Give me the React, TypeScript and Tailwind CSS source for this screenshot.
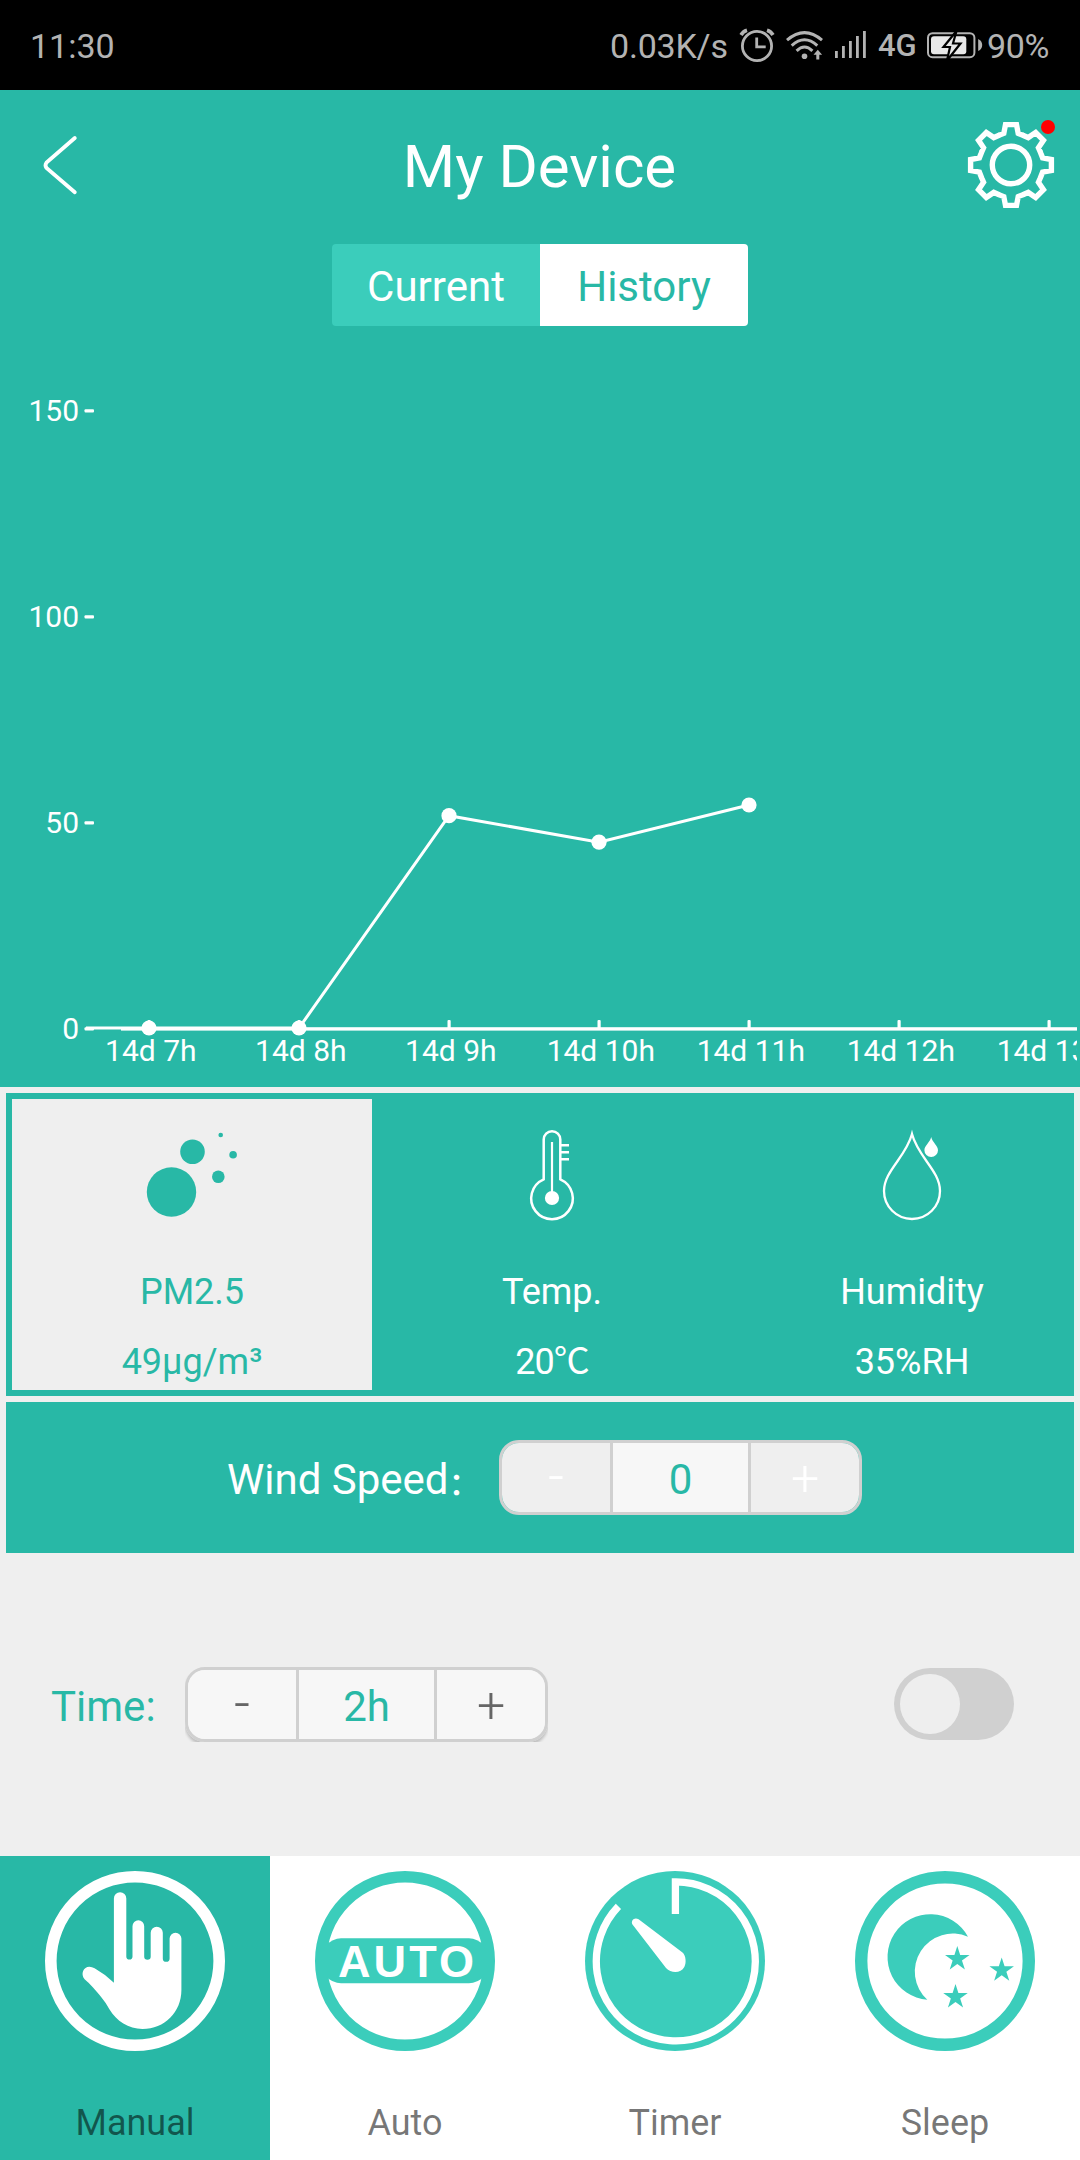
import type { ReactNode } from "react";

const TEAL = "#28b8a6";
const MINT = "#3bcdbb";

function StatusBar() {
  return (
    <div className="flex h-[90px] items-center bg-black pl-[30px] text-[34px] leading-[40px] text-[#b3b3b3]">
      <span className="mt-px">11:30</span>
      <span className="mt-px ml-auto w-[119px] whitespace-nowrap tracking-[-0.2px]">0.03K/s</span>
      <svg className="ml-[10px] shrink-0" width="36" height="36" viewBox="739 27 36 36" fill="none" stroke="#b3b3b3">
        <circle cx="757" cy="46" r="14.6" strokeWidth="2.8" />
        <path d="M756.7 37.5V46.8H765.7" strokeWidth="2.8" />
        <path d="M741 35Q743 31.5 747 30.3M767 30.3Q771 31.5 773 35" strokeWidth="3.6" />
      </svg>
      <svg className="ml-[9px] shrink-0" width="40" height="36" viewBox="784 27 40 36" fill="none" stroke="#b3b3b3">
        <path d="M787 40.2Q804.5 25 822 40.2M791.7 45.6Q804.5 34 817.3 45.6M796.6 50.8Q804.5 43.2 812.4 50.8" strokeWidth="3" />
        <circle cx="804.5" cy="56.2" r="2.8" fill="#b3b3b3" stroke="none" />
        <path d="M813.5 54.8L817.8 49.8L822.1 54.8H819.3V59.6H816.3V54.8Z" fill="#b3b3b3" stroke="none" />
      </svg>
      <svg className="ml-[11px] shrink-0" width="32" height="36" viewBox="835 27 32 36" fill="#b3b3b3">
        <rect x="835" y="51" width="2.8" height="7" />
        <rect x="842" y="46" width="2.8" height="12" />
        <rect x="849" y="41" width="2.8" height="17" />
        <rect x="856" y="36" width="2.8" height="22" />
        <rect x="863" y="31" width="2.8" height="27" />
      </svg>
      <span className="mt-[2px] ml-[11px] w-[40px] text-[31px] font-medium">4G</span>
      <svg className="ml-[7px] shrink-0" width="59" height="36" viewBox="925 27 59 36">
        <rect x="928" y="33.2" width="46.4" height="24" rx="4.5" fill="none" stroke="#b3b3b3" strokeWidth="2" />
        <rect x="931" y="36.3" width="35.3" height="18" rx="3" fill="#e8e8e8" />
        <path d="M978.2 39Q982.2 41 982.2 45T978.2 51Z" fill="#b3b3b3" />
        <path d="M956.5 31L943.5 47H950L947 60.5L960.5 43.5H953Z" fill="#e8e8e8" stroke="#000" strokeWidth="2.2" />
      </svg>
      <span className="mt-px ml-[3px] w-[93px] tracking-[-0.3px]">90%</span>
    </div>
  );
}

function Gear() {
  const steps = [0, 45, 90, 135, 180, 225, 270, 315];
  const points = steps
    .flatMap((deg) =>
      [
        [-13.3, -29.2],
        [-7.2, -31.6],
        [-5.5, -40.4],
        [5.5, -40.4],
        [7.2, -31.6],
        [13.3, -29.2],
      ].map(([x, y]) => {
        const a = (deg * Math.PI) / 180;
        return `${(x * Math.cos(a) - y * Math.sin(a)).toFixed(2)},${(x * Math.sin(a) + y * Math.cos(a)).toFixed(2)}`;
      }),
    )
    .join(" ");
  return (
    <svg width="88" height="88" viewBox="-44 -44 88 88" fill="none" stroke="#fff" strokeWidth="5.4">
      <polygon points={points} />
      <circle r="18.7" />
    </svg>
  );
}

const hours = ["14d 7h", "14d 8h", "14d 9h", "14d 10h", "14d 11h", "14d 12h", "14d 13h"];
const series: [number, number][] = [
  [149, 1028],
  [299, 1028],
  [449, 815.7],
  [599, 842.2],
  [749, 805],
];

function Chart() {
  return (
    <svg className="block" width="1077" height="761" viewBox="0 326 1077 761" fill="#fff" stroke="none">
      {[150, 100, 50, 0].map((v, i) => (
        <g key={v}>
          <text x="79" y={421 + i * 206} fontSize="30" textAnchor="end">
            {v}
          </text>
          <rect x="84.5" y={409.3 + i * 206} width="9.5" height="3.2" rx="1" />
        </g>
      ))}
      <rect x="121" y="1027.2" width="960" height="3.4" />
      {hours.map((h, i) => (
        <g key={h}>
          <rect x={147.5 + i * 150} y="1020" width="3.2" height="9" rx="1" />
          <text x={150.8 + i * 150} y="1061" fontSize="30" textAnchor="middle">
            {h}
          </text>
        </g>
      ))}
      <polyline points={"86,1028 " + series.map((p) => p.join(",")).join(" ")} fill="none" stroke="#fff" strokeWidth="3" />
      {series.map(([x, y]) => (
        <circle key={x} cx={x} cy={y} r="7.6" />
      ))}
    </svg>
  );
}

function Metric({ icon, name, value, active }: { icon: ReactNode; name: string; value: ReactNode; active?: boolean }) {
  return (
    <div
      className={
        "flex h-[291px] w-[360px] shrink-0 flex-col items-center text-[36px] leading-[56px] " +
        (active ? "bg-[#efefef] text-[#28b8a6]" : "text-white")
      }
    >
      <div className="mt-[26px] h-[139px]">{icon}</div>
      <div>{name}</div>
      <div className="mt-[14px]">{value}</div>
    </div>
  );
}

const bubbles = (
  <svg width="100" height="100" viewBox="142 1125 100 100" fill={TEAL}>
    <circle cx="171.5" cy="1192" r="24.7" />
    <circle cx="192.5" cy="1151.7" r="12.3" />
    <circle cx="218.3" cy="1176.7" r="6.3" />
    <circle cx="233.1" cy="1154.7" r="3.8" />
    <circle cx="220.7" cy="1135" r="2.3" />
  </svg>
);

const thermometer = (
  <svg width="100" height="100" viewBox="502 1125 100 100" fill="none" stroke="#fff" strokeWidth="2.5">
    <path d="M543.7 1179.3V1139.5A8.3 8.3 0 0 1 560.3 1139.5V1179.3A20.8 20.8 0 1 1 543.7 1179.3Z" />
    <path d="M552 1142V1198" strokeWidth="2.2" />
    <circle cx="552" cy="1198" r="7.1" fill="#fff" stroke="none" />
    <path d="M561 1145.2H569M561 1152.2H569M561 1159.2H569" />
  </svg>
);

const droplets = (
  <svg width="100" height="100" viewBox="862 1125 100 100" fill="none" stroke="#fff" strokeWidth="2.3">
    <path d="M912 1134C906 1157 884 1171 884 1191A28 28 0 0 0 940 1191C940 1171 918 1157 912 1134Z" />
    <path d="M931.2 1137C930 1142.5 924.4 1145.5 924.4 1150.3A6.8 6.8 0 0 0 938 1150.3C938 1145.5 932.4 1142.5 931.2 1137Z" fill="#fff" stroke="none" />
  </svg>
);

function Stepper({ value, disabled }: { value: string; disabled?: boolean }) {
  const side = disabled ? "bg-[#efefef] text-white" : "bg-[#f7f7f7] text-[#666]";
  return (
    <div className="h-[75px] w-[363px] overflow-hidden">
      <div
        className={
          "flex h-full overflow-hidden rounded-[20px] border-3 border-[#d0d0d0] text-center " +
          (disabled ? "" : "shadow-[0_3px_3px_rgba(0,0,0,0.2)]")
        }
      >
        <div className={"w-[108px] text-[56px] leading-[66px] font-light " + side}>-</div>
        <div className="w-[141px] border-x-3 border-[#d0d0d0] bg-[#f7f7f7] text-[42px] leading-[73px] text-[#28b8a6]">{value}</div>
        <div className={"w-[108px] text-[50px] leading-[70px] font-light " + side}>+</div>
      </div>
    </div>
  );
}

const manualIcon = (
  <svg width="180" height="180" viewBox="0 0 180 180" fill="#fff">
    <circle cx="90" cy="90" r="84.2" fill="none" stroke="#fff" strokeWidth="11.6" />
    <path d="M68.9 111.7V27.5A6.2 6.2 0 0 1 81.3 27.5V85.5A3.1 3.1 0 0 0 87.5 85.5V55.2A5.85 5.85 0 0 1 99.2 55.2V85.5A3.2 3.2 0 0 0 105.7 85.5V61.7A6 6 0 0 1 117.8 61.7V87.4A3.4 3.4 0 0 0 124.6 87.4V67.6A5.9 5.9 0 0 1 136.4 67.6V119C136.4 141 119.5 158 97.5 158C83.5 158 71.5 150 64.4 138.3Q61.5 132.5 56.5 126.5C51 119.5 44.5 112.3 39.6 108.3C35.2 102.8 38.5 95.7 44.4 95.7Q47 95.7 49.6 97.3Q60.5 103.5 68.9 111.7Z" />
  </svg>
);

const autoIcon = (
  <svg width="180" height="180" viewBox="0 0 180 180">
    <circle cx="90" cy="90" r="84.2" fill="none" stroke={MINT} strokeWidth="11.6" />
    <path d="M10 75Q18 67.3 26 67.3H154Q162 67.3 170 75V105Q162 112.3 154 112.3H26Q18 112.3 10 105Z" fill={MINT} />
    <text x="23" y="106" fontSize="45" fontWeight="bold" fill="#fff" textLength="136" style={{ fontFamily: '"Liberation Sans", sans-serif' }}>
      AUTO
    </text>
  </svg>
);

const timerIcon = (
  <svg width="180" height="180" viewBox="0 0 180 180">
    <circle cx="90" cy="90" r="90" fill={MINT} />
    <path d="M33.4 35.4A79.5 79.5 0 1 0 90.4 10.9V43" fill="none" stroke="#fff" strokeWidth="7.3" />
    <path d="M53.6 48.3L97.5 81.5C101 84.5 101.5 92 99.3 96C96 102.5 86 102.5 81 97L47.3 53.3C45.6 49.5 49.5 45.6 53.6 48.3Z" fill="#fff" />
  </svg>
);

function Star({ cx, cy }: { cx: number; cy: number }) {
  const points = Array.from({ length: 10 }, (_, i) => {
    const r = i % 2 ? 4.9 : 12.9;
    const a = (i * Math.PI) / 5;
    return `${(cx + r * Math.sin(a)).toFixed(2)},${(cy - r * Math.cos(a)).toFixed(2)}`;
  }).join(" ");
  return <polygon points={points} />;
}

const sleepIcon = (
  <svg width="180" height="180" viewBox="0 0 180 180" fill={MINT}>
    <circle cx="90" cy="90" r="83.8" fill="none" stroke={MINT} strokeWidth="12.4" />
    <path d="M113 65.7A42.8 42.8 0 1 0 72.3 128.7A38 38 0 0 1 113 65.7Z" />
    <Star cx={102.3} cy={88} />
    <Star cx={146.7} cy={99.3} />
    <Star cx={100.5} cy={126} />
  </svg>
);

function Mode({ icon, label, active }: { icon: ReactNode; label: string; active?: boolean }) {
  return (
    <div className={"flex h-[304px] flex-1 flex-col items-center pt-[15px] " + (active ? "bg-[#28b8a6]" : "bg-white")}>
      {icon}
      <span className="mt-[47px] text-[36px] leading-[50px] text-black/54">{label}</span>
    </div>
  );
}

export default function App() {
  return (
    <div className="flex h-[2160px] w-[1080px] flex-col overflow-hidden bg-[#efefef] [font-family:Roboto,'Noto_Sans_CJK_SC',sans-serif]">
      <StatusBar />
      <div className="flex h-[997px] flex-col bg-[#28b8a6]">
        <header className="flex h-[154px] items-center justify-between pr-[25px] pl-[40px]">
          <svg className="mt-[-4px] w-[89px]" width="89" height="64" viewBox="40 133 89 64" fill="none" stroke="#fff" strokeWidth="3.8" strokeLinecap="round">
            <path d="M74.8 138L46.5 162.5Q44.5 165.3 46.5 168L74.8 192.2" />
          </svg>
          <h1 className="ml-[-17px] text-[60px] leading-[70px] text-white">My Device</h1>
          <div className="relative mt-[-4px]">
            <Gear />
            <span className="absolute top-[-1px] right-0 size-[14px] rounded-full bg-[#ff0000]" />
          </div>
        </header>
        <div className="flex h-[82px] w-[416px] self-center overflow-hidden rounded text-center text-[42px] leading-[85px]">
          <div className="w-1/2 bg-[#3bcdbb] text-white">Current</div>
          <div className="w-1/2 bg-white text-[#28b8a6]">History</div>
        </div>
        <Chart />
      </div>

      <div className="mx-[6px] mt-[6px] flex h-[303px] overflow-hidden bg-[#28b8a6] p-[6px]">
        <Metric icon={bubbles} name="PM2.5" value="49µg/m³" active />
        <Metric icon={thermometer} name="Temp." value={<span className="tracking-[-1px]">20℃</span>} />
        <Metric icon={droplets} name="Humidity" value="35%RH" />
      </div>

      <div className="mx-[6px] mt-[6px] flex h-[151px] items-center bg-[#28b8a6] pl-[221px]">
        <span className="mt-[4px] flex h-[50px] w-[272px] text-[42px] leading-[50px] whitespace-nowrap text-white">
          Wind Speed<span className="mt-[4px] text-[32px] font-medium">：</span>
        </span>
        <Stepper value="0" disabled />
      </div>

      <div className="flex h-[303px] items-center pr-[66px] pl-[51px]">
        <span className="mt-[5px] w-[134px] text-[42px] leading-[50px] text-[#28b8a6]">Time:</span>
        <Stepper value="2h" />
        <div className="mt-[-2px] ml-auto h-[72px] w-[120px] rounded-full bg-[#d0d0d0] p-[6px]">
          <div className="size-[60px] rounded-full bg-[#eeeeee]" />
        </div>
      </div>

      <nav className="flex">
        <Mode icon={manualIcon} label="Manual" active />
        <Mode icon={autoIcon} label="Auto" />
        <Mode icon={timerIcon} label="Timer" />
        <Mode icon={sleepIcon} label="Sleep" />
      </nav>
    </div>
  );
}
